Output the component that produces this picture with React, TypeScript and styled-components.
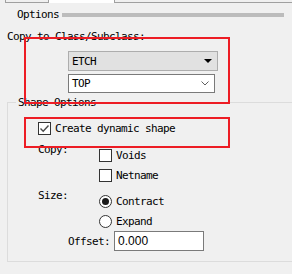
import React from "react";
import styled, { createGlobalStyle } from "styled-components";

const GlobalStyle = createGlobalStyle`
  html, body {
    margin: 0;
    padding: 0;
    background: #f0f0f0;
  }
  body {
    font-family: "DejaVu Sans Mono", "Liberation Mono", monospace;
    font-size: 11px;
    letter-spacing: -0.62px;
    color: #000;
  }
`;

const Page = styled.div`
  position: relative;
  width: 292px;
  height: 274px;
  overflow: hidden;
  background: #f0f0f0;
`;

// Tab strip remnant at the top edge
const TabStrip = styled.div`
  display: flex;
  height: 3px;
`;

const TabPiece = styled.div<{ $w?: number; $active?: boolean; $first?: boolean }>`
  box-sizing: border-box;
  width: ${(p) => (p.$w ? `${p.$w}px` : "auto")};
  flex: ${(p) => (p.$w ? "none" : "1")};
  margin-left: ${(p) => (p.$first ? "5px" : "0")};
  background: ${(p) => (p.$active ? "#ffffff" : "transparent")};
  border-left: ${(p) => (p.$active || p.$first ? "1px solid #a0a0a0" : "none")};
  border-right: ${(p) => (p.$active ? "1px solid #a0a0a0" : "none")};
  border-bottom: ${(p) => (p.$active ? "none" : "1px solid #a0a0a0")};
`;

const SectionHeader = styled.div`
  display: flex;
  align-items: center;
  gap: 3px;
  margin-top: 5px;
  padding-left: 17px;
`;

const HeaderLabel = styled.span`
  line-height: 13px;
`;

const HeaderBar = styled.div`
  width: 222px;
  height: 4px;
  background: #bcbcbc;
`;

const FieldLabel = styled.div<{ $indent: number; $top: number }>`
  line-height: 13px;
  margin-top: ${(p) => p.$top}px;
  padding-left: ${(p) => p.$indent}px;
`;

const SelectStack = styled.div`
  display: flex;
  flex-direction: column;
  gap: 3px;
  margin-top: 8px;
  margin-left: 68px;
`;

const DropList = styled.div`
  box-sizing: border-box;
  width: 150px;
  height: 20px;
  display: flex;
  align-items: center;
  justify-content: space-between;
  padding: 0 5px 0 3px;
  background: #e1e1e1;
  border: 1px solid #adadad;
`;

const ComboBox = styled.div`
  box-sizing: border-box;
  width: 147px;
  height: 19px;
  display: flex;
  align-items: center;
  justify-content: space-between;
  padding: 0 5px 0 3px;
  background: #ffffff;
  border: 1px solid #7a7a7a;
`;

const GroupBox = styled.div`
  position: relative;
  box-sizing: border-box;
  width: 300px;
  margin-top: 9px;
  margin-left: 7px;
  padding: 0 0 10px 0;
  border: 1px solid #dcdcdc;
`;

const GroupTitle = styled.span`
  position: absolute;
  top: -7px;
  left: 8px;
  padding: 0 2px;
  line-height: 13px;
  background: #f0f0f0;
`;

const CheckRow = styled.div<{ $top?: number; $indent?: number }>`
  display: flex;
  align-items: center;
  gap: 4px;
  height: 13px;
  line-height: 13px;
  margin-top: ${(p) => p.$top ?? 0}px;
  padding-left: ${(p) => p.$indent ?? 0}px;
`;

const Box = styled.span`
  box-sizing: border-box;
  width: 13px;
  height: 13px;
  flex: none;
  display: flex;
  align-items: center;
  justify-content: center;
  background: #ffffff;
  border: 1px solid #333333;
`;

const Radio = styled.span<{ $on?: boolean }>`
  box-sizing: border-box;
  width: 13px;
  height: 13px;
  flex: none;
  border-radius: 50%;
  background: #ffffff;
  border: 1px solid #333333;
  display: flex;
  align-items: center;
  justify-content: center;

  &::after {
    content: "";
    display: ${(p) => (p.$on ? "block" : "none")};
    width: 7px;
    height: 7px;
    border-radius: 50%;
    background: #1a1a1a;
  }
`;

const OptionGroup = styled.div<{ $top: number }>`
  display: grid;
  grid-template-columns: 61px 1fr;
  margin-top: ${(p) => p.$top}px;
  padding-left: 30px;
`;

const OptionLabel = styled.div`
  line-height: 13px;
`;

const OptionList = styled.div`
  display: flex;
  flex-direction: column;
  gap: 7px;
  padding-top: 6px;
`;

const OffsetRow = styled.div`
  display: flex;
  align-items: center;
  gap: 4px;
  margin-top: 3px;
  padding-left: 60px;
  line-height: 13px;
`;

const NumberInput = styled.div`
  box-sizing: border-box;
  width: 90px;
  height: 20px;
  display: flex;
  align-items: center;
  padding-left: 3px;
  background: #ffffff;
  border: 1px solid #7a7a7a;
  font-family: "Liberation Sans", Arial, sans-serif;
  font-size: 12px;
  letter-spacing: 0;
`;

// Red annotation rectangles drawn over the dialog
const Highlight = styled.div<{ $x: number; $y: number; $w: number; $h: number }>`
  position: absolute;
  box-sizing: border-box;
  left: ${(p) => p.$x}px;
  top: ${(p) => p.$y}px;
  width: ${(p) => p.$w}px;
  height: ${(p) => p.$h}px;
  border: 2px solid #ed1c24;
  pointer-events: none;
`;

const DownTriangle = () => (
  <svg width="8" height="4" viewBox="0 0 8 4">
    <path d="M0 0 H8 L4 4 Z" fill="#000" />
  </svg>
);

const Chevron = () => (
  <svg width="8" height="5" viewBox="0 0 8 5">
    <path d="M0.5 0.5 L4 4 L7.5 0.5" fill="none" stroke="#606060" strokeWidth="1" />
  </svg>
);

const Check = () => (
  <svg width="11" height="11" viewBox="0 0 11 11">
    <path d="M1.5 5.5 L4.2 8.2 L9.5 2.5" fill="none" stroke="#4a4a4a" strokeWidth="1.4" />
  </svg>
);

const App: React.FC = () => {
  return (
    <Page>
      <GlobalStyle />
      <TabStrip>
        <TabPiece $first $w={43} />
        <TabPiece $active $w={67} />
        <TabPiece />
      </TabStrip>

      <SectionHeader>
        <HeaderLabel>Options</HeaderLabel>
        <HeaderBar />
      </SectionHeader>

      <FieldLabel $indent={7} $top={9}>Copy to Class/Subclass:</FieldLabel>

      <SelectStack>
        <DropList>
          <span>ETCH</span>
          <DownTriangle />
        </DropList>
        <ComboBox>
          <span>TOP</span>
          <Chevron />
        </ComboBox>
      </SelectStack>

      <GroupBox>
        <GroupTitle>Shape Options</GroupTitle>

        <CheckRow $top={19} $indent={30}>
          <Box>
            <Check />
          </Box>
          <span>Create dynamic shape</span>
        </CheckRow>

        <OptionGroup $top={8}>
          <OptionLabel>Copy:</OptionLabel>
          <OptionList>
            <CheckRow>
              <Box />
              <span>Voids</span>
            </CheckRow>
            <CheckRow>
              <Box />
              <span>Netname</span>
            </CheckRow>
          </OptionList>
        </OptionGroup>

        <OptionGroup $top={7}>
          <OptionLabel>Size:</OptionLabel>
          <OptionList>
            <CheckRow>
              <Radio $on />
              <span>Contract</span>
            </CheckRow>
            <CheckRow>
              <Radio />
              <span>Expand</span>
            </CheckRow>
          </OptionList>
        </OptionGroup>

        <OffsetRow>
          <span>Offset:</span>
          <NumberInput>0.000</NumberInput>
        </OffsetRow>
      </GroupBox>

      <Highlight $x={24} $y={37} $w={206} $h={67} />
      <Highlight $x={24} $y={117} $w={206} $h={31} />
    </Page>
  );
};

export default App;
